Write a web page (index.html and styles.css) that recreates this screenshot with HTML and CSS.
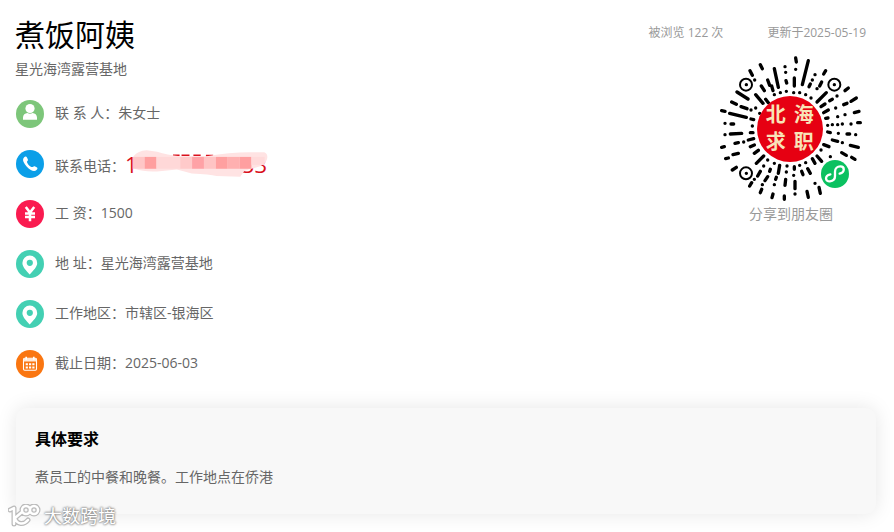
FILE: index.html
```html
<!DOCTYPE html>
<html lang="zh-CN">
<head>
    <meta charset="UTF-8">
    <meta name="viewport" content="width=device-width, initial-scale=1.0">
    <title>煮饭阿姨</title>
    <link rel="stylesheet" href="styles.css">
</head>
<body>

    <div class="job">
        <div class="job-main">
            <h1>煮饭阿姨</h1>
            <p class="company">星光海湾露营基地</p>
            <ul class="info">
                <li>
                    <svg class="icon" viewBox="0 0 28 28"><circle cx="14" cy="14" r="14" fill="#7dc67a"/><circle cx="14" cy="8.5" r="4.6" fill="#fff"/><path d="M7 19.800v-2.300c0-2.600 2-4.300 4.400-4.500 1.500 1.100 3.700 1.100 5.200 0 2.400.2 4.400 1.900 4.400 4.500v2.300z" fill="#fff"/></svg>
                    <span class="text">联 系 人：朱女士</span>
                </li>
                <li>
                    <svg class="icon" viewBox="0 0 28 28"><circle cx="14" cy="14" r="14" fill="#0b9fe8"/><path d="M8.200 7.200c1.200-1.100 2.200-.8 2.900.5l.8 1.700c.5 1.100-.9 1.500-.9 2.500.3 2 3.200 4.800 5.100 5.200 1 .1 1.400-1.400 2.600-.8l1.900 1c1.200.7 1.100 1.600-.1 2.800-1.300 1.300-3.500 1.200-5.700-.1-2.900-1.700-5.900-4.900-7.200-8-.8-1.900-.7-3.600.6-4.800z" fill="#fff"/></svg>
                    <span class="phone-label">联系电话：</span>
                    <span class="phone">
                        <span>1</span><span>33</span>
                        <svg class="mask" viewBox="390 24 420 88">
                            <path d="M518 43h20M544 43h24M580 43h22M618 44h22" stroke="#d9101c" stroke-width="5"/>
                            <path d="M398 46Q412 30 438 28L470 32Q500 42 540 46L620 46Q690 34 750 34L795 34Q808 40 803 56Q798 74 770 80L735 90L722 108L650 106Q630 100 575 98L530 86L470 92Q430 94 402 84Z" fill="#ffe3e3"/>
                            <path d="M396 48h36v36h-36z" fill="#ffc6c6"/><path d="M432 48h36v36h-36z" fill="#ff9f9f"/>
                            <path d="M468 48h72v36h-72z" fill="#ffd8d8"/><path d="M540 48h36v36h-36z" fill="#ffcaca"/>
                            <path d="M576 48h36v36h-36z" fill="#ffa2a6"/><path d="M612 48h36v36h-36z" fill="#ffc4c4"/>
                            <path d="M648 48h36v36h-36z" fill="#ffa0a0"/><path d="M684 48h36v36h-36z" fill="#ffb0b0"/>
                            <path d="M720 48h36v36h-36z" fill="#ff9fa0"/><path d="M756 48h40v24h-40z" fill="#ffdada"/>
                        </svg>
                    </span>
                </li>
                <li>
                    <svg class="icon" viewBox="0 0 28 28"><circle cx="14" cy="14" r="14" fill="#fa1b50"/><path d="M9.800 7l4.200 5.600 4.200-5.600M9 13.400h10M9 17h10M14 12.500v8.700" fill="none" stroke="#fff" stroke-width="2.500"/></svg>
                    <span class="text">工 资：1500</span>
                </li>
                <li>
                    <svg class="icon" viewBox="0 0 28 28"><circle cx="14" cy="14" r="14" fill="#43d0b3"/><path d="M13.700 24.500C10 20.300 6.400 16.800 6.400 12.900a7.400 7.400 0 0 1 14.800 0c0 3.900-3.800 7.400-7.500 11.600z" fill="#fff"/><circle cx="13.800" cy="12.800" r="3.100" fill="#43d0b3"/></svg>
                    <span class="text">地 址：星光海湾露营基地</span>
                </li>
                <li>
                    <svg class="icon" viewBox="0 0 28 28"><circle cx="14" cy="14" r="14" fill="#43d0b3"/><path d="M13.700 24.500C10 20.300 6.400 16.800 6.400 12.900a7.400 7.400 0 0 1 14.800 0c0 3.900-3.800 7.400-7.500 11.600z" fill="#fff"/><circle cx="13.800" cy="12.800" r="3.100" fill="#43d0b3"/></svg>
                    <span class="text">工作地区：市辖区-银海区</span>
                </li>
                <li>
                    <svg class="icon" viewBox="0 0 28 28"><circle cx="14" cy="14" r="14" fill="#fa7611"/><rect x="7.500" y="8.300" width="13" height="12" rx="1.200" fill="none" stroke="#fff" stroke-width="1.100"/><path d="M7.500 8.300h13v3.200h-13z" fill="#ffe9d8"/><path d="M10.200 6.700v3M17.800 6.700v3" stroke="#fff" stroke-width="1.600"/><path d="M9.700 14.300h8.800M9.700 17.500h8.800" stroke="#fff" stroke-width="1.900" stroke-dasharray="2.200 1.100"/></svg>
                    <span class="text">截止日期：2025-06-03</span>
                </li>
            </ul>
        </div>

        <div class="job-side">
            <div class="meta">
                <span>被浏览 122 次</span>
                <span>更新于2025-05-19</span>
            </div>
            <div class="share">
                <svg class="qr" viewBox="24 18 432 438">
                    <g fill="none" stroke="#000" stroke-width="10" stroke-linecap="round">
                        <!-- top left -->
                        <path transform="translate(12 6)" d="M105 56l7 14M136 38l6 12M119 84h.1M94 98h.1M66 120l33 21M139 102l9 14M158 84l6 16M178 50l12 56M210 44h.1M212 61h.1M213 86l2 7M214 118h.1M196 122h.1M170 102l4 14M178 128h.1M122 128l22 26M152 142l8 10M50 150l14 7M78 164l18 6M108 174h.1M122 168h.1M134 184h.1M20 176l10 2M44 184l50 12M108 201l8 2M30 214h.1M48 216h8M112 222h.1"/>
                        <!-- top right -->
                        <path transform="translate(234 6)" d="M20 18l2 12M20 52h.1M16 78v24M14 122h.1M58 26l-18 72M32 122h.1M50 128h.1M78 68h.1M70 84h.1M64 96l-4 8M66 138h.1M110 56l-6 10M98 90l-6 12M84 110h.1M136 98h.1M112 122l-28 28M178 108l-10 8M144 132h.1M130 142l-8 4M108 156l-12 8M202 138l-16 10M174 154l-10 4M140 168h.1M118 174l-14 8M210 178l-14 4M168 188h.1M146 194h.1M117 198l-7 1M116 220h.1M130 218h.1M146 218h.1M160 216h.1M186 216h.1M206 212h8"/>
                        <!-- bottom left -->
                        <path transform="translate(12 234)" d="M30 20h.1M46 18l34-2M106 14h8M20 58l8-2M60 46l10-2M86 42h.1M100 36l16-4M32 92l8-2M54 80l16-4M52 126l12-8M106 56l12-5M118 76l12-9M94 136h.1M124 106l22-22M158 96h.1M146 114h.1M136 130l-8 14M118 154h.1M110 164l-6 10M178 106h.1M166 124l-2 6M158 146l-8 12M142 170h.1M140 184l-4 10M194 112l-4 24M184 148l-2 6M178 170h.1M174 198l-3 11M216 114h.1M214 132h.1M212 154l-2 18M208 204v10"/>
                        <!-- bottom right -->
                        <path transform="translate(234 234)" d="M116 12l8 2M148 16h.1M174 18h8M200 20h.1M130 36l16 4M160 44h.1M184 52l24 6M104 50l16 6M96 66h.1M84 84l14 16M158 74l14 8M188 88l10 6M124 86h.1M70 92l8 14M56 122l8 14M50 104h.1M38 130l4 10M16 116v8M14 142h.1M18 160v22M18 198h.1M32 112h.1M78 166h.1M54 190l4 18M90 178l4 18"/>
                    </g>
                    <g fill="none" stroke="#000" stroke-width="6">
                        <circle cx="105" cy="104" r="18"/>
                        <circle cx="370" cy="104" r="18"/>
                        <circle cx="105" cy="370" r="18"/>
                    </g>
                    <circle cx="237" cy="237" r="99" fill="#e60012"/>
                    <g class="seal">
                        <text x="164" y="216">北</text>
                        <text x="248" y="216">海</text>
                        <text x="164" y="298">求</text>
                        <text x="248" y="298">职</text>
                    </g>
                    <circle cx="372" cy="372" r="42" fill="#0bc160"/>
                    <path d="M358 373c-18 4-16 22-1 21 10-1 15-7 15-16v-13c0-10 7-16 16-16 13 0 15 17-2 22" fill="none" stroke="#fff" stroke-width="7" stroke-linecap="round"/>
                </svg>
                <p>分享到朋友圈</p>
            </div>
        </div>
    </div>

    <div class="detail">
        <h2>具体要求</h2>
        <p>煮员工的中餐和晚餐。工作地点在侨港</p>
    </div>

    <div class="watermark">
        <svg viewBox="0 0 34 24">
            <g fill="none" stroke-linecap="round" stroke-linejoin="round">
                <path d="M2 6l4-2v16M14 8l-7 6c2 7 9 7 13 2M18 10a4 4 0 1 1 4-4 4 4 0 0 0 4 4 4 4 0 1 0-4-4 4 4 0 0 1-4 4z" stroke="#bbb" stroke-width="5"/>
                <path d="M2 6l4-2v16M14 8l-7 6c2 7 9 7 13 2M18 10a4 4 0 1 1 4-4 4 4 0 0 0 4 4 4 4 0 1 0-4-4 4 4 0 0 1-4 4z" stroke="#fff" stroke-width="2.500"/>
            </g>
        </svg>
        <span>大数跨境</span>
    </div>

</body>
</html>
```
FILE: styles.css
```css
* {
    box-sizing: border-box;
}

body {
    font-family: 'Open Sans', 'Noto Sans CJK SC', sans-serif;
    font-size: 14px;
    line-height: 20px;
    background-color: #fff;
    color: #666;
    margin: 0;
    padding: 15px 18px 16px 15px;
    position: relative;
}

h1, h2, p, ul {
    margin: 0;
    padding: 0;
}

.job {
    display: flex;
    justify-content: space-between;
    align-items: flex-start;
}

h1 {
    font-size: 30px;
    font-weight: 400;
    line-height: 40px;
    color: #000;
}

.company {
    margin-top: 4px;
}

.info {
    list-style: none;
    margin-top: 10px;
    padding-left: 1px;
}

.info li {
    display: flex;
    align-items: center;
    height: 50px;
}

.icon {
    width: 28px;
    height: 28px;
    margin-right: 11px;
}

.text {
    padding-bottom: 2px;
}

.phone-label {
    padding-top: 4px;
}

.phone {
    display: flex;
    justify-content: space-between;
    position: relative;
    width: 142px;
    font-size: 22px;
    color: #d9101c;
}

.mask {
    position: absolute;
    left: 5px;
    top: -5px;
    width: 140px;
    height: 29px;
}

.job-side {
    padding-right: 10px;
}

.meta {
    display: flex;
    justify-content: flex-end;
    gap: 44px;
    padding-top: 8px;
    font-size: 12px;
    color: #999;
}

.share {
    display: flex;
    flex-direction: column;
    align-items: center;
    width: 144px;
    margin: 13px 3px 0 auto;
    color: #999;
}

.qr {
    width: 144px;
    height: 146px;
}

.share p {
    margin-top: 2px;
}

.seal {
    font-family: 'Noto Sans CJK SC', sans-serif;
    font-size: 60px;
    font-weight: 700;
    fill: #f8e3b8;
}

.detail {
    margin-top: 19px;
    margin-left: 1px;
    padding: 19px;
    background-color: #f8f8f8;
    border-radius: 10px;
    box-shadow: 0 0 20px rgba(0, 0, 0, 0.1);
}

.detail h2 {
    font-size: 16px;
    line-height: 24px;
    color: #000;
}

.detail p {
    margin: 16px 0 8px;
}

.watermark {
    display: flex;
    align-items: center;
    gap: 2px;
    position: absolute;
    left: 8px;
    bottom: 2px;
    font-size: 18px;
    line-height: 24px;
    color: #fff;
    text-shadow: 0 0 2px #888, 0 0 2px #888, 0 0 3px #999;
}

.watermark svg {
    width: 34px;
    height: 24px;
}
```
